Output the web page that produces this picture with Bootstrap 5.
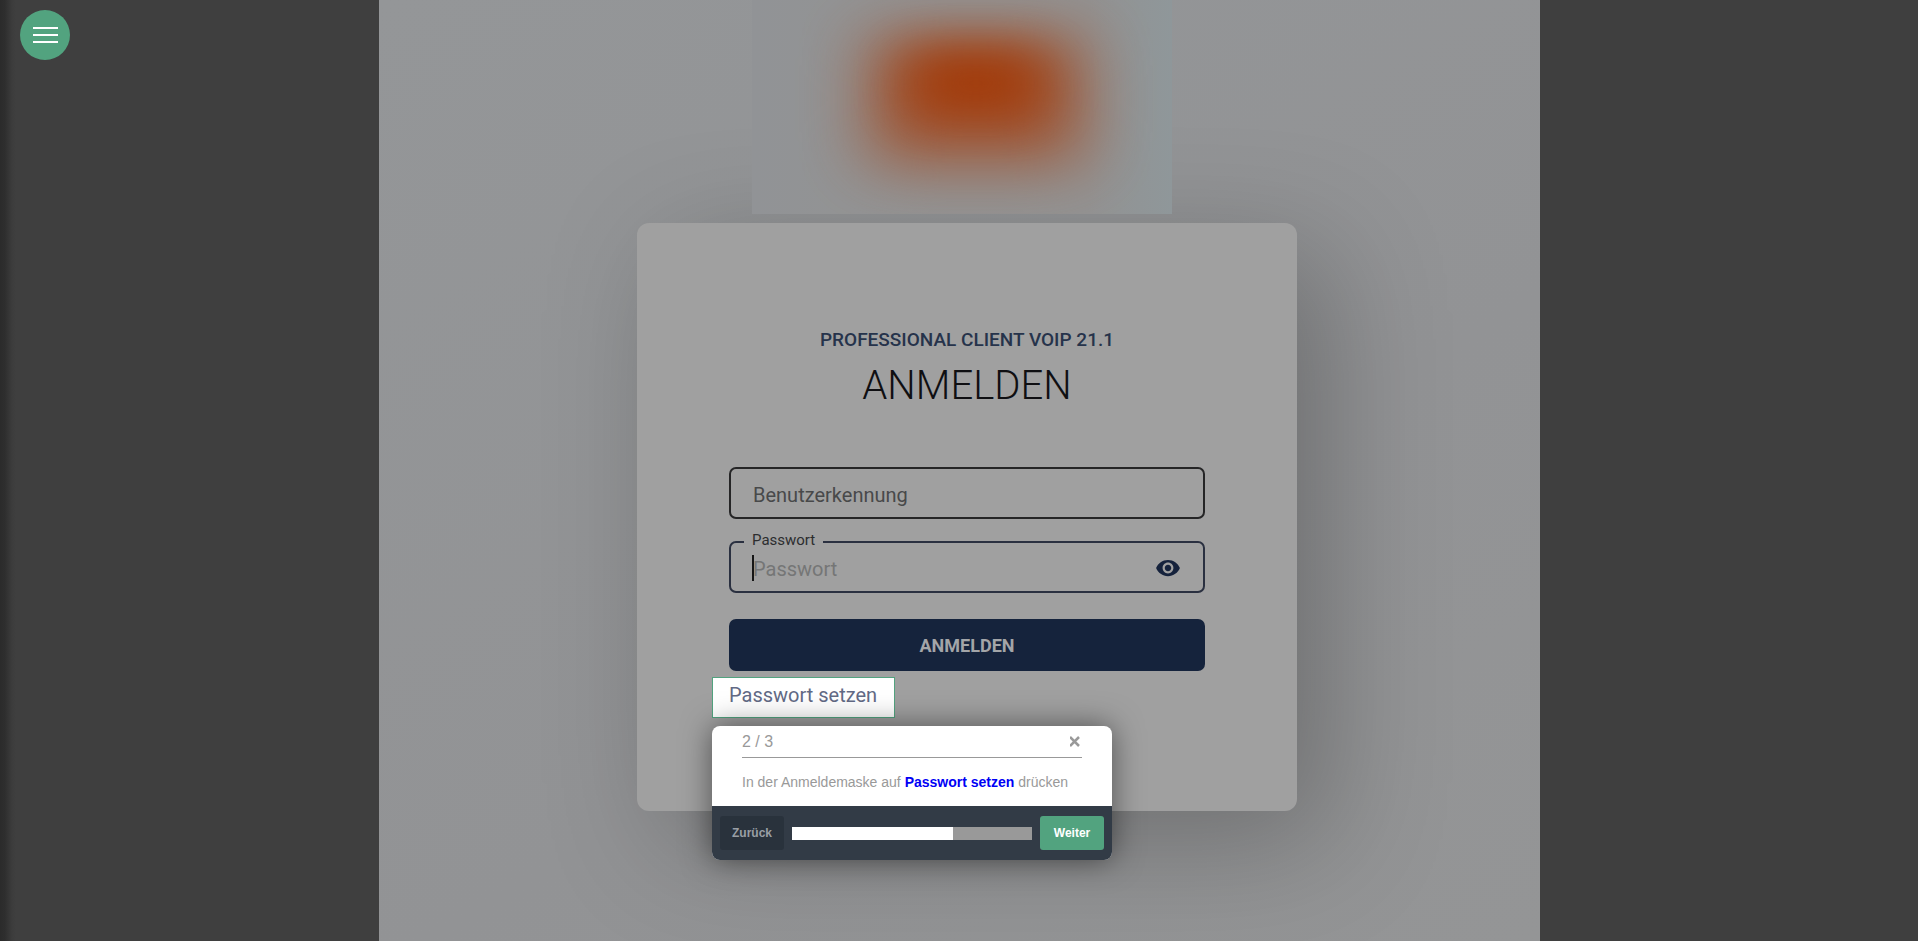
<!DOCTYPE html>
<html lang="de">
<head>
<meta charset="utf-8">
<meta name="viewport" content="width=device-width, initial-scale=1">
<title>Professional Client VoIP 21.1</title>
<link href="https://cdn.jsdelivr.net/npm/bootstrap@5.3.0/dist/css/bootstrap.min.css" rel="stylesheet">
<style>
  body { background: #3f3f3f; font-family: Roboto, "Liberation Sans", sans-serif; overflow-x: hidden; }
  .edge-shade { width: 16px; background: linear-gradient(90deg, #2b2b2b 0, #2e2e2e 30%, #3c3c3c 75%, #3f3f3f); }
  .menu-toggle { width: 50px; height: 50px; margin: 10px 20px; gap: 5px; background: #52a37f; z-index: 5; }
  .menu-toggle span { width: 25px; height: 2px; background: #fff; }
  .stage { max-width: 1161px; padding-left: 16px; background: linear-gradient(150deg, #949698, #929395 60%, #949596); overflow: hidden; }
  .brand-area { width: 420px; max-width: 100%; height: 214px; margin: 0 10px 9px 0; overflow: hidden; background: linear-gradient(90deg, #919396, #929394 20%, #929292 80%, #8f979a); z-index: 1; }
  .brand-area svg { width: 100%; height: 100%; }
  .login-card { width: 660px; max-width: 100%; padding: 105px 92px 93px; background: #a0a0a0; border-radius: 12px; box-shadow: 30px 30px 120px rgba(0, 0, 0, .25); }
  .product { font-size: 19px; line-height: 24px; font-weight: 500; color: #26334b; }
  .headline { font-size: 40px; line-height: 48px; font-weight: 300; color: #0f0f12; margin: 10px 0 57px; }
  .login-input { height: 52px; padding: 4px 22px 0; font-size: 20px; background: transparent; border: 2px solid #252526; border-radius: 7px; color: #222; }
  .login-input:focus { background: transparent; box-shadow: none; border-color: #1c2b46; }
  .login-input::placeholder { color: #48494a; opacity: 1; }
  .password-input { border-color: #2a3040; }
  .password-input::placeholder { color: #757676; }
  .password-row { margin-top: 22px; }
  .notch-label { top: -11px; left: 15px; padding: 0 8px; font-size: 15px; line-height: 20px; color: #2c2d2f; background: #a0a0a0; }
  .text-caret { left: 23px; top: 14px; width: 2px; height: 26px; background: #161616; }
  .reveal { right: 24px; top: 14px; color: #15223c; line-height: 0; }
  .submit-btn { height: 52px; margin-top: 26px; background: #15233c; color: #a3a5a8; font-size: 18px; font-weight: 700; border-radius: 7px; }
  .tour-target { width: 183px; margin: 6px 0 0 -17px; }
  .target-link { height: 41px; padding: 4px 0 0 16px; background: #fff; border: 1px solid #52a37f; font-size: 20px; line-height: 26px; color: #626a85; white-space: nowrap; }
  .tour-box { top: 49px; left: 0; width: 400px; font-family: "Liberation Sans", Arial, sans-serif; color: #999; background: #fff; border-radius: 8px; box-shadow: 0 0 30px rgba(0, 0, 0, .5); z-index: 3; }
  .tour-head { margin: 0 30px; height: 32px; font-size: 16px; border-bottom: 1px solid #999; }
  .tour-text { margin: 0 30px; padding-top: 14px; height: 48px; font-size: 14px; line-height: 20px; }
  .tour-text strong { color: #0000f5; }
  .tour-foot { height: 54px; background: #323b46; border-radius: 0 0 8px 8px; }
  .tour-btn { width: 64px; height: 34px; font-size: 12px; font-weight: 700; border-radius: 3px; }
  .tour-back { background: #29323c; color: #999fa5; }
  .tour-next { background: #52a37f; color: #fff; }
  .tour-progress { height: 13px; background: #999; border-radius: 0; }
  .tour-progress .progress-bar { background: #fff; }
</style>
</head>
<body>
<div class="edge-shade position-fixed top-0 bottom-0 start-0"></div>
<button type="button" class="menu-toggle btn p-0 border-0 rounded-circle position-fixed top-0 start-0 d-flex flex-column align-items-center justify-content-center" aria-label="Menü">
  <span></span><span></span><span></span>
</button>

<main class="stage min-vh-100 mx-auto d-flex flex-column align-items-center">
  <div class="brand-area position-relative" aria-hidden="true">
    <svg viewBox="0 0 420 214" preserveAspectRatio="none">
      <defs>
        <filter id="haze" x="-80%" y="-80%" width="260%" height="260%" color-interpolation-filters="sRGB"><feGaussianBlur stdDeviation="34 30"/></filter>
        <filter id="core" x="-100%" y="-100%" width="300%" height="300%" color-interpolation-filters="sRGB"><feGaussianBlur stdDeviation="28 22"/></filter>
      </defs>
      <rect x="118" y="34" width="212" height="130" rx="14" fill="#a0502c" opacity=".9" filter="url(#haze)"/>
      <rect x="160" y="50" width="128" height="66" rx="20" fill="#a33a08" opacity=".95" filter="url(#core)"/>
    </svg>
  </div>

  <section class="login-card">
    <p class="product text-center mb-0">PROFESSIONAL CLIENT VOIP 21.1</p>
    <h1 class="headline text-center">ANMELDEN</h1>
    <form>
      <input id="user" type="text" class="form-control login-input" placeholder="Benutzerkennung" aria-label="Benutzerkennung">
      <div class="password-row position-relative">
        <input id="pass" type="password" class="form-control login-input password-input" placeholder="Passwort">
        <label class="notch-label position-absolute" for="pass">Passwort</label>
        <span class="text-caret position-absolute"></span>
        <button type="button" class="reveal btn p-0 border-0 position-absolute" aria-label="Passwort anzeigen">
          <svg width="26" height="26" viewBox="0 0 24 24" fill="currentColor"><path d="M12 4.500C7 4.500 2.730 7.610 1 12c1.730 4.390 6 7.500 11 7.500s9.270-3.110 11-7.500c-1.730-4.390-6-7.500-11-7.500zM12 17c-2.760 0-5-2.240-5-5s2.240-5 5-5 5 2.240 5 5-2.240 5-5 5zm0-8c-1.660 0-3 1.340-3 3s1.340 3 3 3 3-1.340 3-3-1.340-3-3-3z"/></svg>
        </button>
      </div>
      <button type="submit" class="submit-btn btn w-100 border-0 p-0">ANMELDEN</button>
    </form>

    <div class="tour-target position-relative">
      <a href="#" class="target-link d-block text-decoration-none">Passwort setzen</a>
      <div class="tour-box position-absolute" role="dialog" aria-label="Schritt 2 von 3">
        <div class="tour-head d-flex align-items-center justify-content-between">
          <span>2 / 3</span>
          <button type="button" class="btn p-0 border-0 lh-1 d-flex" aria-label="Schließen">
            <svg width="12" height="12" viewBox="0 0 12 12" stroke="#999" stroke-width="2.500"><path d="M0 1l9 9M9 1l-9 9"/></svg>
          </button>
        </div>
        <p class="tour-text mb-0">In der Anmeldemaske auf <strong>Passwort setzen</strong> drücken</p>
        <div class="tour-foot d-flex align-items-center gap-2 px-2">
          <button type="button" class="tour-btn tour-back btn p-0 border-0">Zurück</button>
          <div class="tour-progress progress flex-grow-1" role="progressbar" aria-label="Fortschritt" aria-valuenow="67" aria-valuemin="0" aria-valuemax="100">
            <div class="progress-bar" style="width:67%"></div>
          </div>
          <button type="button" class="tour-btn tour-next btn p-0 border-0">Weiter</button>
        </div>
      </div>
    </div>
  </section>
</main>
<script src="https://cdn.jsdelivr.net/npm/bootstrap@5.3.0/dist/js/bootstrap.bundle.min.js"></script>
</body>
</html>
